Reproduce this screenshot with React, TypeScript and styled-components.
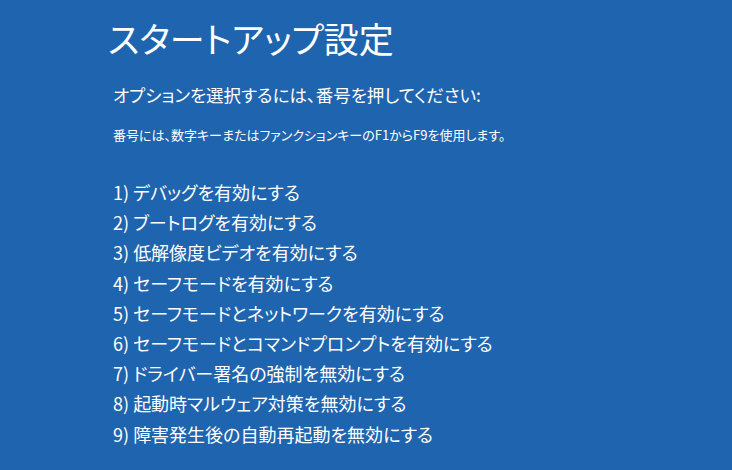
import styled, { createGlobalStyle } from 'styled-components';

const GlobalStyle = createGlobalStyle`
  html, body {
    margin: 0;
    padding: 0;
    background: #1f64ae;
  }
  body {
    font-family: "Noto Sans CJK JP", "Noto Sans", sans-serif;
    color: #ffffff;
    font-feature-settings: "palt";
  }
`;

const Screen = styled.div`
  width: 732px;
  height: 470px;
  overflow: hidden;
  background: #1f64ae;
  padding: 14px 0 0 108px;
  box-sizing: border-box;
`;

const Title = styled.h1`
  margin: 0;
  font-size: 35px;
  font-weight: 400;
  line-height: 48px;
`;

const Body = styled.div`
  padding-left: 5px;
  display: flex;
  flex-direction: column;
`;

const Prompt = styled.p`
  margin: 21px 0 0;
  font-size: 17.5px;
  line-height: 24px;
`;

const Hint = styled.p`
  margin: 18px 0 0;
  font-size: 13px;
  line-height: 20px;
`;

const OptionList = styled.ol`
  list-style: none;
  margin: 32px 0 0;
  padding: 0;
`;

const OptionItem = styled.li`
  font-size: 18px;
  line-height: 30.2px;
  white-space: nowrap;
`;

const options = [
  'デバッグを有効にする',
  'ブートログを有効にする',
  '低解像度ビデオを有効にする',
  'セーフモードを有効にする',
  'セーフモードとネットワークを有効にする',
  'セーフモードとコマンドプロンプトを有効にする',
  'ドライバー署名の強制を無効にする',
  '起動時マルウェア対策を無効にする',
  '障害発生後の自動再起動を無効にする',
];

export default function App() {
  return (
    <>
      <GlobalStyle />
      <Screen>
        <Title>スタートアップ設定</Title>
        <Body>
          <Prompt>オプションを選択するには、番号を押してください:</Prompt>
          <Hint>番号には、数字キーまたはファンクションキーのF1からF9を使用します。</Hint>
          <OptionList>
            {options.map((label, i) => (
              <OptionItem key={label}>
                {i + 1}) {label}
              </OptionItem>
            ))}
          </OptionList>
        </Body>
      </Screen>
    </>
  );
}
